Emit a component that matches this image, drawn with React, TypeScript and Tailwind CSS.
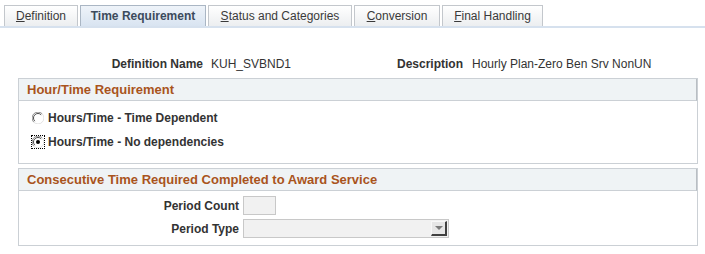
import React from 'react';

const tabs = [
  { key: 'D', rest: 'efinition', w: 'w-[74px]' },
  { key: '', rest: 'Time Requirement', w: 'w-[126px]', active: true },
  { key: 'S', rest: 'tatus and Categories', w: 'w-[144px]' },
  { key: 'C', rest: 'onversion', w: 'w-[86px]' },
  { key: 'F', rest: 'inal Handling', w: 'w-[101px]' },
];

function Radio({ checked, focused }: { checked?: boolean; focused?: boolean }) {
  return (
    <span
      className={
        'flex items-center justify-center w-[14px] h-[14px] ' +
        (focused ? 'border border-dotted border-black' : 'border border-transparent')
      }
    >
      <svg width="12" height="12" viewBox="0 0 12 12">
        <circle cx="6" cy="6" r="5.5" fill="#ffffff" />
        <path d="M10.2 1.8 A5.5 5.5 0 0 0 1.8 10.2" fill="none" stroke="#8a8a8a" strokeWidth="1" />
        <path d="M9.2 2.8 A4.5 4.5 0 0 0 2.8 9.2" fill="none" stroke="#4a4a4a" strokeWidth="1" />
        <path d="M1.8 10.2 A5.5 5.5 0 0 0 10.2 1.8" fill="none" stroke="#e2e2e2" strokeWidth="1" />
        {checked && <circle cx="6" cy="6" r="2" fill="#000000" />}
      </svg>
    </span>
  );
}

function GroupBox({ title, children }: { title: string; children: React.ReactNode }) {
  return (
    <div className="w-[680px] border border-[#cbd0d5] bg-white">
      <div className="h-[22px] flex items-center pl-[8px] bg-[#eff3f5] border-b border-[#cbd0d5] border-r border-r-[#b9bec3]">
        <span className="text-[13px] font-bold text-[#a9541c]">{title}</span>
      </div>
      {children}
    </div>
  );
}

export default function App() {
  return (
    <div
      className="w-[705px] h-[254px] bg-white text-[12px] text-[#333333]"
      style={{ fontFamily: '"Liberation Sans", Arial, sans-serif' }}
    >
      {/* Tabs */}
      <div className="pt-[5px] pl-[4px] flex items-end gap-[2px] border-b-2 border-[#d6e1ee]">
        {tabs.map((t) => (
          <div
            key={t.rest}
            className={
              t.w +
              ' h-[21px] flex items-center justify-center border border-b-0 ' +
              (t.active
                ? 'bg-gradient-to-b from-[#eef3f9] to-[#d9e4f1] border-[#aab6c4] font-bold text-[#3c4a5c]'
                : 'bg-gradient-to-b from-[#ffffff] to-[#eceef0] border-[#c3c7cc] text-[#3a3a3a]')
            }
          >
            {t.key && <span className="underline">{t.key}</span>}
            {t.rest}
          </div>
        ))}
      </div>

      {/* Header fields */}
      <div className="mt-[29px] flex items-center h-[14px]">
        <div className="w-[203px] text-right font-bold">Definition Name</div>
        <div className="w-[127px] pl-[8px]">KUH_SVBND1</div>
        <div className="w-[133px] text-right font-bold">Description</div>
        <div className="pl-[9px]">Hourly Plan-Zero Ben Srv NonUN</div>
      </div>

      {/* Groups */}
      <div className="mt-[7px] ml-[18px] flex flex-col gap-[4px]">
        <GroupBox title="Hour/Time Requirement">
          <div className="h-[62px] pl-[12px] pt-[10px] flex flex-col gap-[10px] font-bold">
            <div className="flex items-center gap-[3px] h-[14px]">
              <Radio />
              <span>Hours/Time - Time Dependent</span>
            </div>
            <div className="flex items-center gap-[3px] h-[14px]">
              <Radio checked focused />
              <span>Hours/Time - No dependencies</span>
            </div>
          </div>
        </GroupBox>
        <GroupBox title="Consecutive Time Required Completed to Award Service">
          <div className="h-[54px] pt-[5px] flex flex-col gap-[4px] font-bold">
            <div className="flex items-center">
              <div className="w-[224px] text-right pr-[4px]">Period Count</div>
              <div className="w-[33px] h-[19px] bg-[#f1f1f1] border border-[#c8c8c8]" />
            </div>
            <div className="flex items-center">
              <div className="w-[224px] text-right pr-[4px]">Period Type</div>
              <div className="w-[206px] h-[19px] bg-[#f1f1f1] border border-[#c8c8c8] flex justify-end items-center pr-[1px]">
                <div className="w-[16px] h-[15px] bg-[#e6e6e6] border-t border-l border-[#f8f8f8] border-r-2 border-b-2 border-r-[#404040] border-b-[#404040] flex items-center justify-center">
                  <svg width="8" height="5" viewBox="0 0 8 5">
                    <path d="M0 0 L8 0 L4 4 Z" fill="#7a7a7a" />
                  </svg>
                </div>
              </div>
            </div>
          </div>
        </GroupBox>
      </div>
    </div>
  );
}
